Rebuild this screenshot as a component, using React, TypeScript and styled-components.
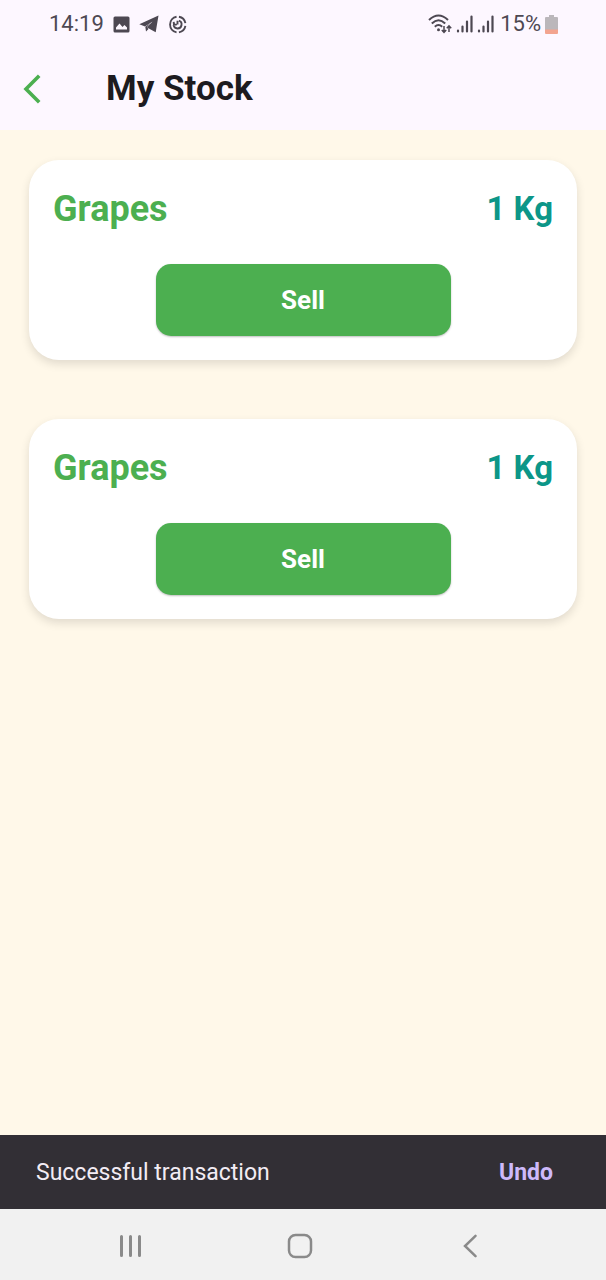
import React from 'react';
import styled, { createGlobalStyle } from 'styled-components';

const GlobalStyle = createGlobalStyle`
  *, *::before, *::after { box-sizing: border-box; }
  body {
    margin: 0;
    background: #fff8e9;
    font-family: Roboto, 'Liberation Sans', sans-serif;
  }
  button {
    border: 0;
    padding: 0;
    background: none;
    font-family: inherit;
    cursor: pointer;
  }
  svg { display: block; flex: none; }
`;

const Screen = styled.div`
  display: flex;
  flex-direction: column;
  min-height: 100vh;
`;

const StatusBar = styled.div`
  display: flex;
  align-items: center;
  justify-content: space-between;
  height: 48px;
  padding: 0 48px 0 49px;
  background: #fdf7ff;
  color: #4d4852;
  font-size: 22px;
  line-height: 30px;
`;

const StatusGroup = styled.div<{ $gap: number }>`
  display: flex;
  align-items: center;
  gap: ${({ $gap }) => $gap}px;
`;

const AppBar = styled.header`
  display: flex;
  align-items: center;
  gap: 42px;
  height: 82px;
  background: #fdf7ff;
`;

const BackButton = styled.button`
  display: flex;
  align-items: center;
  justify-content: center;
  width: 64px;
  height: 64px;
  color: #4caf50;
`;

const Title = styled.h1`
  margin: 0;
  color: #1d1b20;
  font-size: 35px;
  font-weight: 700;
  line-height: 44px;
`;

const StockList = styled.ul`
  display: flex;
  flex: 1;
  flex-direction: column;
  gap: 59px;
  margin: 0;
  padding: 30px 29px;
  list-style: none;
`;

const Card = styled.li`
  display: flex;
  flex-direction: column;
  align-items: center;
  gap: 30px;
  padding: 24px;
  border-radius: 30px;
  background: #fff;
  box-shadow: 0 4px 10px rgba(0, 0, 0, 0.12);
`;

const CardHeader = styled.div`
  display: flex;
  align-items: center;
  justify-content: space-between;
  width: 100%;
  line-height: 50px;
  font-weight: 700;
`;

const ProductName = styled.h2`
  margin: 0;
  color: #4caf50;
  font-size: 36px;
  font-weight: 700;
`;

const Quantity = styled.span`
  color: #0c9688;
  font-size: 33px;
`;

const SellButton = styled.button`
  width: 295px;
  max-width: 100%;
  height: 72px;
  border-radius: 15px;
  background: #4caf50;
  box-shadow: 0 1px 2px rgba(0, 0, 0, 0.25);
  color: #fff;
  font-size: 26px;
  font-weight: 700;
`;

const Snackbar = styled.div`
  display: flex;
  align-items: center;
  justify-content: space-between;
  height: 74px;
  padding: 2px 53px 0 36px;
  background: #322f35;
  color: #f2ecf4;
  font-size: 23px;
  line-height: 32px;
`;

const UndoButton = styled.button`
  color: #cdb9fb;
  font-size: 23px;
  font-weight: 700;
  line-height: 32px;
`;

const NavBar = styled.nav`
  display: flex;
  align-items: center;
  justify-content: center;
  gap: 106px;
  height: 71px;
  padding: 2px 6px 0 0;
  background: #f1f1f1;
  color: #8a8a8a;
`;

const NavButton = styled.button`
  display: flex;
  align-items: center;
  justify-content: center;
  width: 64px;
  height: 48px;
  color: inherit;
`;

const ImageIcon = () => (
  <svg width="17" height="17" viewBox="0 0 17 17" aria-hidden="true">
    <path
      fill="currentColor"
      fillRule="evenodd"
      d="M2 .5h13A1.5 1.5 0 0 1 16.5 2v13a1.5 1.5 0 0 1-1.5 1.5H2A1.5 1.5 0 0 1 .5 15V2A1.5 1.5 0 0 1 2 .5zM3 13.500h11v-2l-2.500-2.500-2 2-3-3.500-3.500 4z"
    />
  </svg>
);

const TelegramIcon = () => (
  <svg width="20" height="18" viewBox="0 0 20 18" aria-hidden="true">
    <path fill="currentColor" d="M19.500 .5 16.700 17.300 8 12.600 13.500 6.500 6 11.600 .3 9.200z" />
    <path fill="currentColor" d="M12 7.800 6.300 11.800 7 16.500 9.500 14 8 12.300z" />
  </svg>
);

const SyncIcon = () => (
  <svg width="19" height="19" viewBox="0 0 20 20" fill="none" stroke="currentColor" strokeWidth="2" aria-hidden="true">
    <path d="M11.500 1.800A8.400 8.400 0 0 1 18.300 8.500M18.300 11.500A8.400 8.400 0 0 1 11.500 18.300M9 18.300A8.400 8.400 0 0 1 9 1.800" />
    <path d="M11.500 6A4.200 4.200 0 1 1 5.900 10.500M6 7.200l.3 3.300 3-.6M10 6v4" />
  </svg>
);

const WifiIcon = () => (
  <svg width="24" height="20" viewBox="0 0 24 20" fill="none" stroke="currentColor" strokeWidth="2" aria-hidden="true">
    <path d="M1 6Q10.500-3 20 6M3.800 9.500q6.700-6.500 13.400 0M6.800 12.800q3.700-3.500 7.400 0" />
    <circle cx="10.500" cy="15.800" r="1.500" fill="currentColor" stroke="none" />
    <path strokeWidth="1.500" d="M16 12v6.500M13.800 16l2.200 2.400 2.200-2.400M21 18v-6M18.800 14.200l2.200-2.400 2.200 2.400" />
  </svg>
);

const SignalIcon = () => (
  <svg width="17" height="18" viewBox="0 0 17 18" fill="none" stroke="currentColor" strokeWidth="2.200" strokeLinecap="round" aria-hidden="true">
    <path d="M2 15.500v1M6.500 11.500v5M11 6.500v10M15.500 1.500v15" />
  </svg>
);

const BatteryIcon = () => (
  <svg width="13" height="19" viewBox="0 0 13 19" aria-hidden="true">
    <path fill="#bbb7bb" d="M4 0h5v2h3a1 1 0 0 1 1 1v12H0V3a1 1 0 0 1 1-1h3z" />
    <path fill="#f3a48f" d="M0 14.500h13V18a1 1 0 0 1-1 1H1a1 1 0 0 1-1-1z" />
  </svg>
);

const BackIcon = () => (
  <svg width="18" height="30" viewBox="0 0 18 30" fill="none" stroke="currentColor" strokeWidth="3.600" aria-hidden="true">
    <path d="M16.200 1.800 3 15 16.200 28.200" />
  </svg>
);

const RecentsIcon = () => (
  <svg width="24" height="24" viewBox="0 0 24 24" fill="none" stroke="currentColor" strokeWidth="3" strokeLinecap="round" aria-hidden="true">
    <path d="M3.500 2.500v19M12.500 2.500v19M21.500 2.500v19" />
  </svg>
);

const HomeIcon = () => (
  <svg width="26" height="26" viewBox="0 0 26 26" fill="none" stroke="currentColor" strokeWidth="2.500" aria-hidden="true">
    <rect x="2" y="2" width="22" height="22" rx="6.500" />
  </svg>
);

const NavBackIcon = () => (
  <svg width="14" height="24" viewBox="0 0 14 24" fill="none" stroke="currentColor" strokeWidth="2.500" strokeLinecap="round" aria-hidden="true">
    <path d="M12.500 1.800 2 12 12.500 22.200" />
  </svg>
);

const stock = [
  { id: 1, name: 'Grapes', quantity: '1 Kg' },
  { id: 2, name: 'Grapes', quantity: '1 Kg' },
];

export default function App() {
  return (
    <Screen>
      <GlobalStyle />
      <StatusBar>
        <StatusGroup $gap={9}>
          <span>14:19</span>
          <ImageIcon />
          <TelegramIcon />
          <SyncIcon />
        </StatusGroup>
        <StatusGroup $gap={6}>
          <StatusGroup $gap={4}>
            <WifiIcon />
            <SignalIcon />
            <SignalIcon />
          </StatusGroup>
          <StatusGroup $gap={4}>
            <span>15%</span>
            <BatteryIcon />
          </StatusGroup>
        </StatusGroup>
      </StatusBar>
      <AppBar>
        <BackButton type="button" aria-label="Back">
          <BackIcon />
        </BackButton>
        <Title>My Stock</Title>
      </AppBar>
      <StockList>
        {stock.map((item) => (
          <Card key={item.id}>
            <CardHeader>
              <ProductName>{item.name}</ProductName>
              <Quantity>{item.quantity}</Quantity>
            </CardHeader>
            <SellButton type="button">Sell</SellButton>
          </Card>
        ))}
      </StockList>
      <Snackbar role="status">
        <span>Successful transaction</span>
        <UndoButton type="button">Undo</UndoButton>
      </Snackbar>
      <NavBar aria-label="System">
        <NavButton type="button" aria-label="Recent apps">
          <RecentsIcon />
        </NavButton>
        <NavButton type="button" aria-label="Home">
          <HomeIcon />
        </NavButton>
        <NavButton type="button" aria-label="Back">
          <NavBackIcon />
        </NavButton>
      </NavBar>
    </Screen>
  );
}
